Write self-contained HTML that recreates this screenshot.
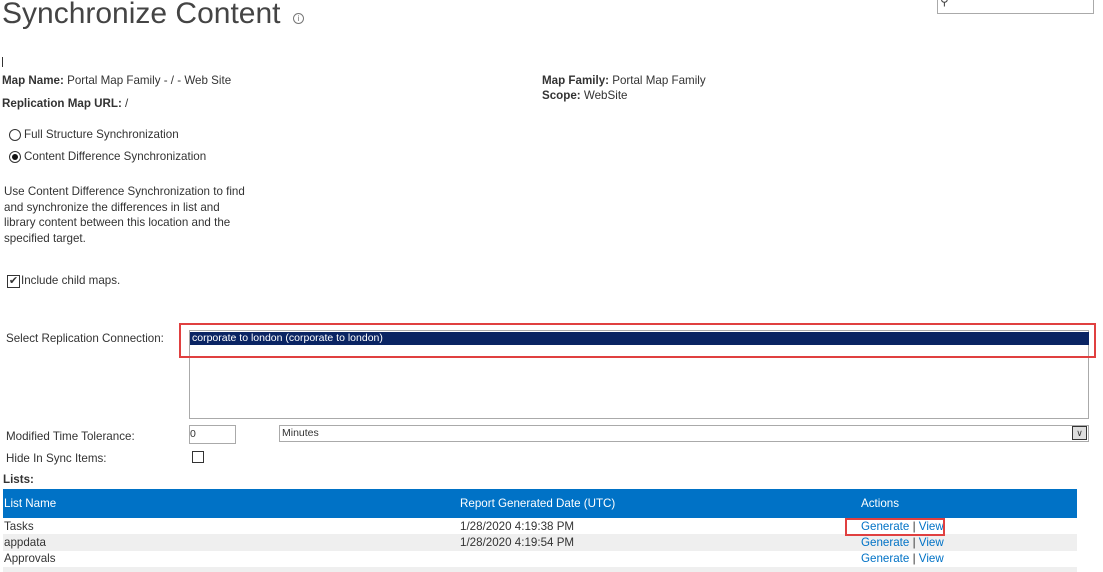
<html><head><style>
body{margin:0;width:1103px;height:570px;overflow:hidden;background:#fff;font-family:"Liberation Sans",sans-serif;font-size:11.6px;color:#333;position:relative}
.a{position:absolute;white-space:nowrap}
b{color:#333}
</style></head><body>
<div class="a" style="left:2px;top:-3px;font-size:30px;color:#444;letter-spacing:0px">Synchronize Content</div>
<div class="a" style="left:293px;top:13px;width:9px;height:9px;border:1px solid #777;border-radius:50%;font-size:8px;line-height:9px;text-align:center;color:#777">i</div>
<div class="a" style="left:937px;top:-2px;width:155px;height:14px;border:1px solid #aaa"></div>
<div class="a" style="left:940px;top:-6px;font-size:12px;color:#444">&#9906;</div>
<div class="a" style="left:2px;top:57px;width:1px;height:10px;background:#333"></div>
<div class="a" style="left:2px;top:74px"><b>Map Name:</b> Portal Map Family - / - Web Site</div>
<div class="a" style="left:2px;top:97px"><b>Replication Map URL:</b> /</div>
<div class="a" style="left:542px;top:74px"><b>Map Family:</b> Portal Map Family</div>
<div class="a" style="left:542px;top:89px"><b>Scope:</b> WebSite</div>
<div class="a" style="left:9px;top:129px;width:10px;height:10px;border:1px solid #333;border-radius:50%"></div>
<div class="a" style="left:24px;top:128px">Full Structure Synchronization</div>
<div class="a" style="left:9px;top:151px;width:10px;height:10px;border:1px solid #333;border-radius:50%"><div style="margin:2px;width:6px;height:6px;border-radius:50%;background:#111"></div></div>
<div class="a" style="left:24px;top:150px">Content Difference Synchronization</div>
<div class="a" style="left:4px;top:184px;line-height:15.5px">Use Content Difference Synchronization to find<br>and synchronize the differences in list and<br>library content between this location and the<br>specified target.</div>
<div class="a" style="left:7px;top:275px;width:11px;height:11px;border:1px solid #333;font-size:11px;line-height:11px;text-align:center">&#10004;</div>
<div class="a" style="left:21px;top:274px">Include child maps.</div>
<div class="a" style="left:6px;top:332px">Select Replication Connection:</div>
<div class="a" style="left:189px;top:330px;width:898px;height:87px;border:1px solid #aaa"></div>
<div class="a" style="left:190px;top:332px;width:897px;height:13px;background:#0a2463;color:#fff;font-size:10.5px;line-height:13px;padding-left:2px">corporate to london (corporate to london)</div>
<div class="a" style="left:179px;top:323px;width:913px;height:31px;border:2px solid #e04040"></div>
<div class="a" style="left:6px;top:430px">Modified Time Tolerance:</div>
<div class="a" style="left:189px;top:425px;width:45px;height:17px;border:1px solid #aaa;font-size:10.5px;line-height:17px">0</div>
<div class="a" style="left:279px;top:425px;width:806px;height:15px;border:1px solid #aaa;font-size:10.5px;line-height:15px;padding-left:2px">Minutes</div>
<div class="a" style="left:1072px;top:426px;width:13px;height:12px;border:1px solid #333;background:#ddd;font-size:9px;line-height:12px;text-align:center">&#8744;</div>
<div class="a" style="left:6px;top:452px">Hide In Sync Items:</div>
<div class="a" style="left:192px;top:451px;width:10px;height:10px;border:1px solid #333"></div>
<div class="a" style="left:3px;top:473px"><b>Lists:</b></div>
<div class="a" style="left:3px;top:489px;width:1074px;height:29px;background:#0072c6;color:#fff;line-height:29px">
<span class="a" style="left:1px">List Name</span><span class="a" style="left:457px">Report Generated Date (UTC)</span><span class="a" style="left:858px">Actions</span></div>
<div class="a" style="left:3px;top:534px;width:1074px;height:17px;background:#efefef"></div>
<div class="a" style="left:3px;top:567px;width:1074px;height:5px;background:#efefef"></div>
<div class="a" style="left:4px;top:520px">Tasks</div><div class="a" style="left:460px;top:520px">1/28/2020 4:19:38 PM</div>
<div class="a" style="left:4px;top:536px">appdata</div><div class="a" style="left:460px;top:536px">1/28/2020 4:19:54 PM</div>
<div class="a" style="left:4px;top:552px">Approvals</div>
<div class="a" style="left:861px;top:520px;color:#0072c6">Generate <span style="color:#333">|</span> View</div>
<div class="a" style="left:861px;top:536px;color:#0072c6">Generate <span style="color:#333">|</span> View</div>
<div class="a" style="left:861px;top:552px;color:#0072c6">Generate <span style="color:#333">|</span> View</div>
<div class="a" style="left:845px;top:518px;width:96px;height:14px;border:2px solid #e04040"></div>
</body></html>
